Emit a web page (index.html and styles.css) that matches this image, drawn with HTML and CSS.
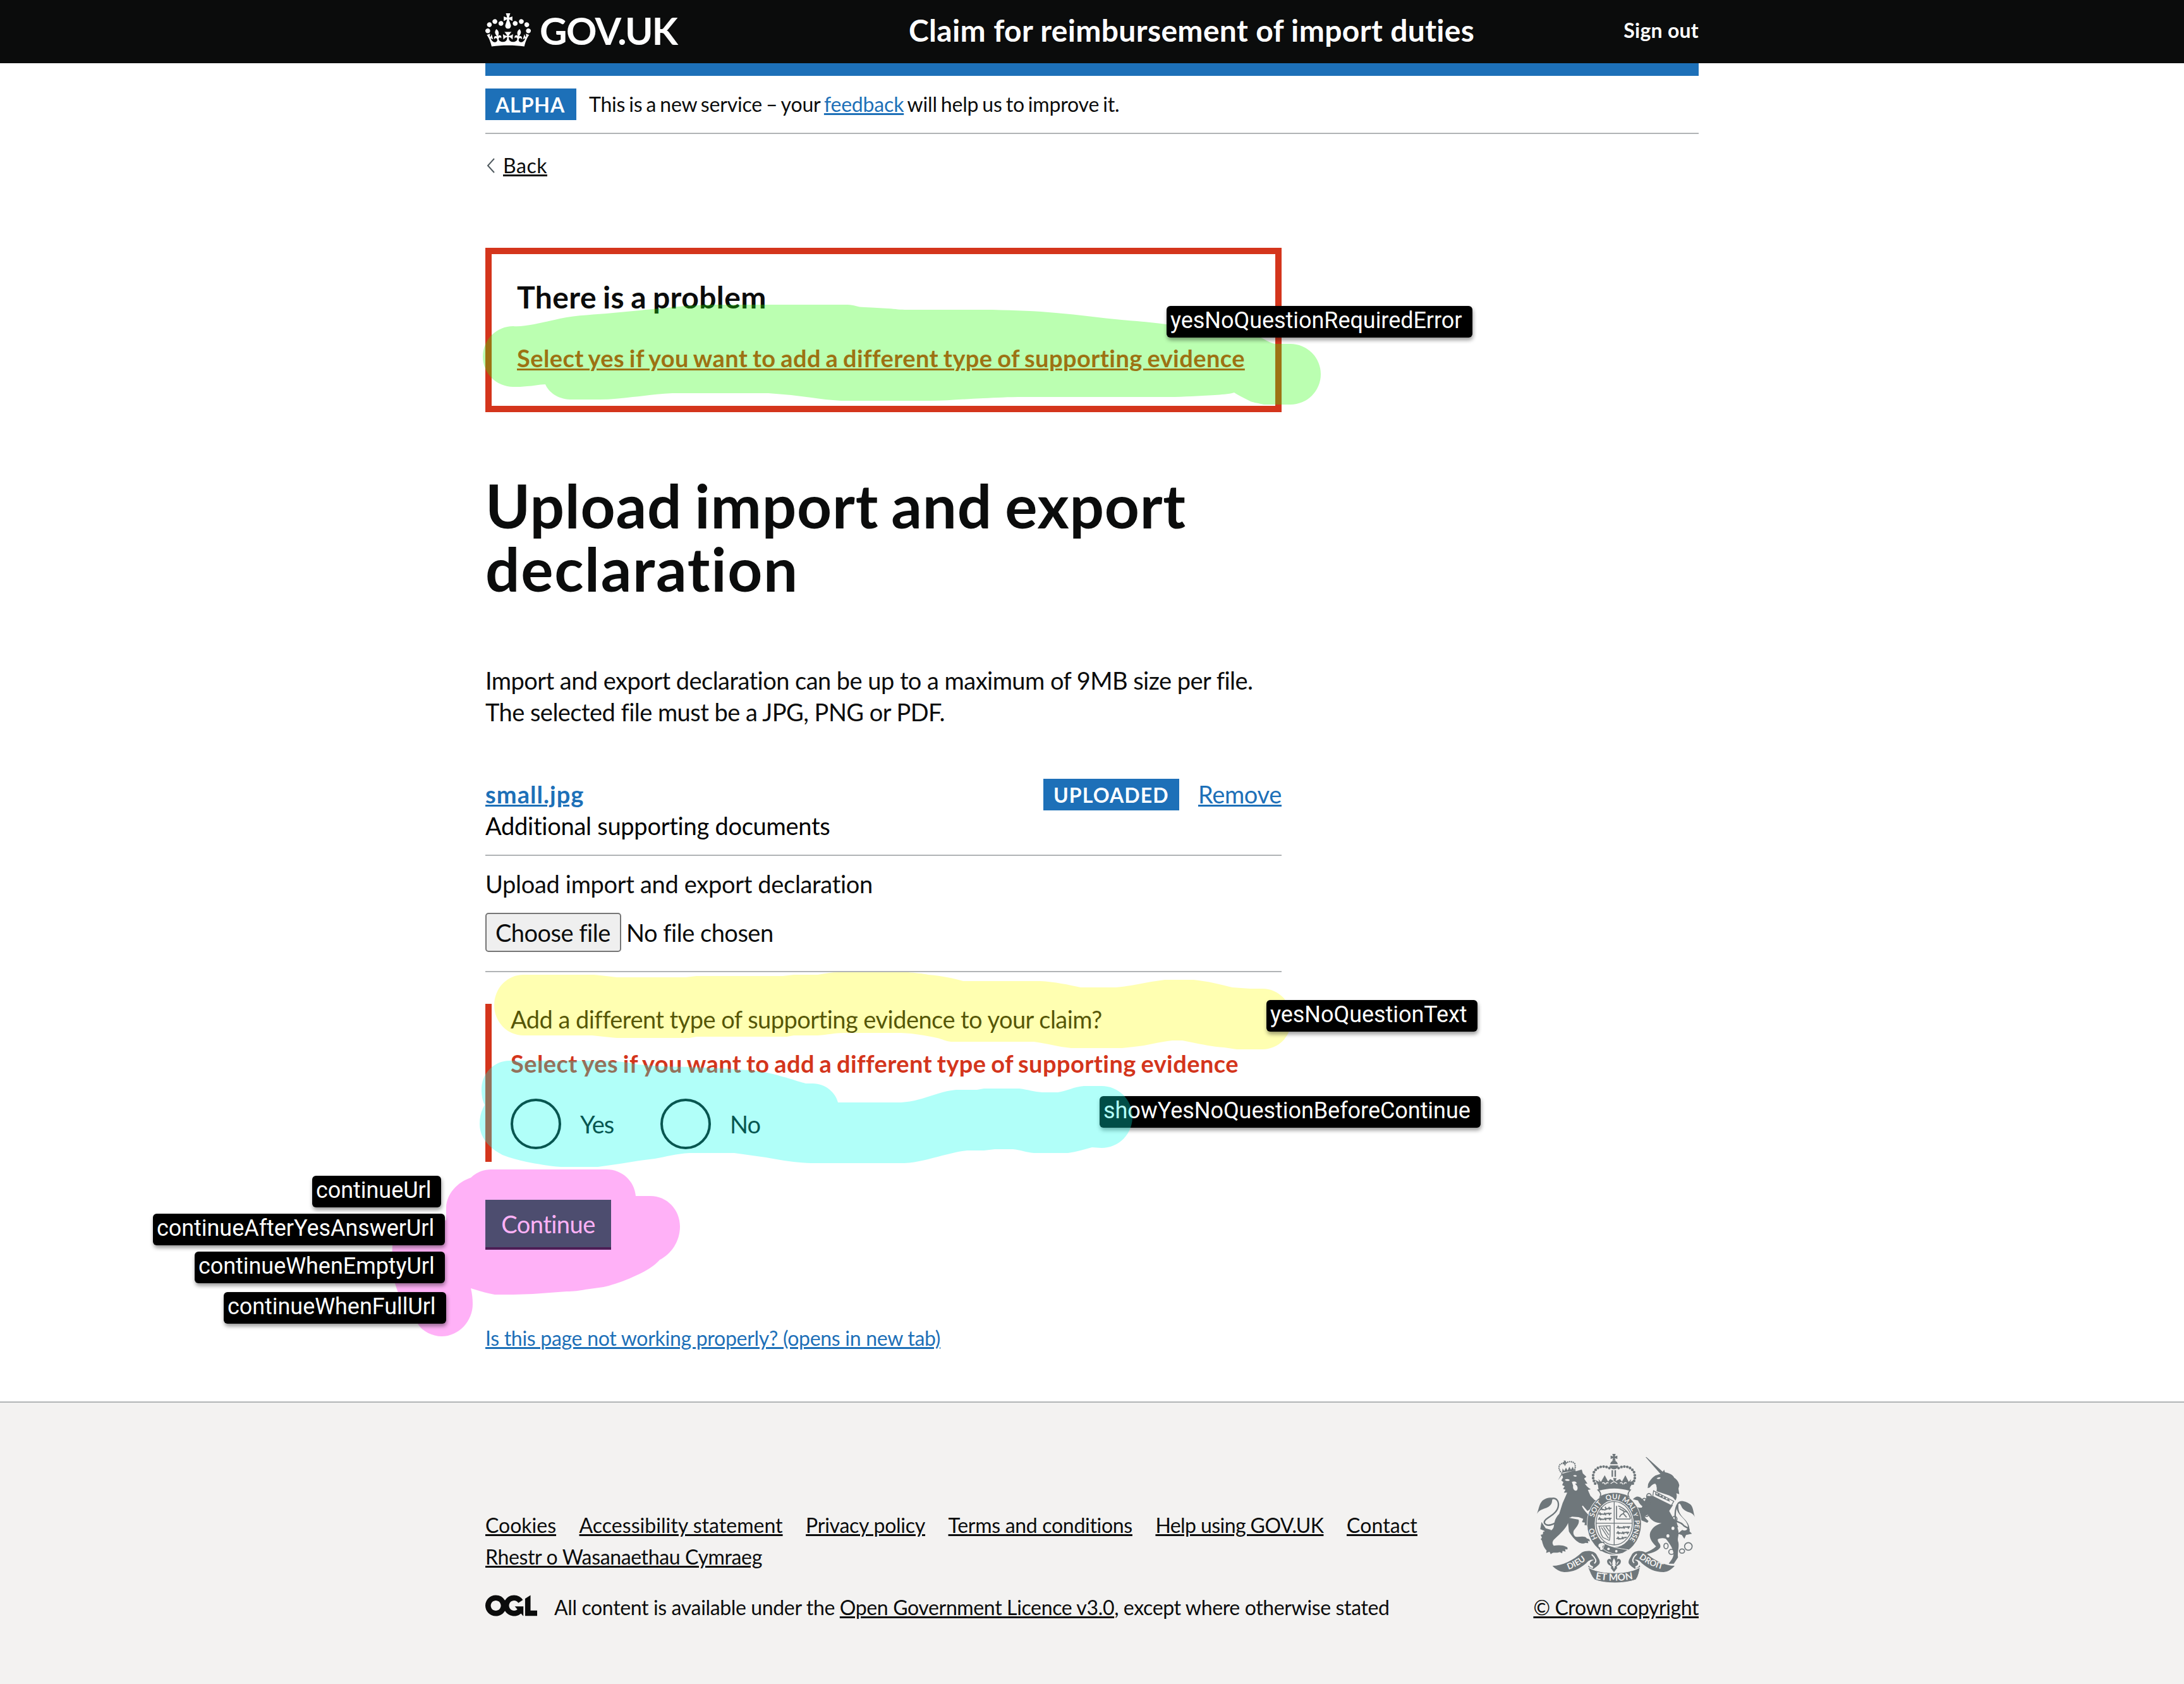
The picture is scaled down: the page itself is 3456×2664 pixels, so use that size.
FILE: index.html
```
<!DOCTYPE html>
<html lang="en">
<head>
<meta charset="utf-8">
<title>Upload import and export declaration</title>
<link rel="stylesheet" href="styles.css">
</head>
<body>
<header class="header">
  <div class="container header-row">
    <div class="logo">
      <svg class="crown" viewBox="0 0 132 97" fill="#fff"><path fill-rule="evenodd" d="M25 30.2c3.5 1.5 7.7-.2 9.1-3.7 1.5-3.6-.2-7.8-3.9-9.2-3.6-1.4-7.6.3-9.1 3.9-1.4 3.5.3 7.5 3.9 9zM9 39.5c3.6 1.5 7.8-.2 9.2-3.7 1.5-3.6-.2-7.8-3.9-9.1-3.6-1.5-7.6.2-9.1 3.8-1.4 3.5.3 7.5 3.8 9zM4.4 57.2c3.5 1.5 7.7-.2 9.1-3.8 1.5-3.6-.2-7.7-3.9-9.1-3.5-1.5-7.6.3-9.1 3.8-1.4 3.5.3 7.6 3.9 9.1zm38.3-21.4c3.5 1.5 7.7-.2 9.1-3.8 1.5-3.6-.2-7.7-3.9-9.1-3.6-1.5-7.6.3-9.1 3.8-1.3 3.6.4 7.7 3.9 9.1zm64.4-5.6c-3.6 1.5-7.8-.2-9.1-3.7-1.5-3.6.2-7.8 3.8-9.2 3.6-1.4 7.7.3 9.2 3.9 1.3 3.5-.4 7.5-3.9 9zm15.9 9.3c-3.6 1.5-7.7-.2-9.1-3.7-1.5-3.6.2-7.8 3.7-9.1 3.6-1.5 7.7.2 9.2 3.8 1.5 3.5-.3 7.5-3.8 9zm4.7 17.7c-3.6 1.5-7.8-.2-9.2-3.8-1.5-3.6.2-7.7 3.9-9.1 3.6-1.5 7.7.3 9.2 3.8 1.3 3.5-.4 7.6-3.9 9.1zM89.3 35.8c-3.6 1.5-7.8-.2-9.2-3.8-1.4-3.6.2-7.7 3.9-9.1 3.6-1.5 7.7.3 9.2 3.8 1.4 3.6-.3 7.7-3.9 9.1zM69.7 17.7l8.9 4.7V9.3l-8.9 2.8c-.2-.3-.5-.6-.9-.9L72.4 0H59.6l3.5 11.2c-.3.3-.6.5-.9.9l-8.8-2.8v13.1l8.8-4.7c.3.3.6.7.9.9l-5 15.4v.1c-.2.8-.4 1.6-.4 2.4 0 4.1 3.1 7.5 7 8.1h.2c.3 0 .7.1 1 .1.4 0 .7 0 1-.1h.2c4-.6 7.1-4.1 7.1-8.1 0-.8-.1-1.7-.4-2.4V34l-5.1-15.4c.4-.2.7-.6 1-.9zM66 92.8c16.9 0 32.8 1.1 47.1 3.2 4-16.9 8.9-26.7 14-33.5l-9.6-3.4c1 4.9 1.1 7.2 0 10.2-1.5-1.4-3-4.3-4.2-8.7L108.6 76c2.8-2 5-3.2 7.5-3.3-4.4 9.4-10 11.9-13.6 11.2-4.3-.8-6.3-4.6-5.6-7.9 1-4.7 5.7-5.9 8-.5 4.3-8.7-3-11.4-7.6-8.8 7.1-7.2 7.9-13.5 2.1-21.1-8 6.1-8.1 12.3-4.5 20.8-4.7-5.4-12.1-2.5-9.5 6.2 3.4-5.2 7.9-2 7.2 3.1-.6 4.3-6.4 7.8-13.5 7.2-10.3-.9-10.9-8-11.2-13.8 2.5-.5 7.1 1.8 11 7.3L80.2 60c-4.1 4.4-8 5.3-12.3 5.4 1.4-4.4 8-11.6 8-11.6H55.5s6.4 7.2 7.9 11.6c-4.2-.1-8-1-12.3-5.4l1.4 16.4c3.9-5.5 8.5-7.7 10.9-7.3-.3 5.8-.9 12.8-11.1 13.8-7.2.6-12.9-2.9-13.5-7.2-.7-5 3.8-8.3 7.1-3.1 2.7-8.7-4.6-11.6-9.4-6.2 3.7-8.5 3.6-14.7-4.6-20.8-5.8 7.6-5 13.9 2.2 21.1-4.7-2.6-11.9.1-7.7 8.8 2.3-5.5 7.1-4.2 8.1.5.7 3.3-1.3 7.1-5.7 7.9-3.5.7-9-1.8-13.5-11.2 2.5.1 4.7 1.3 7.5 3.3l-4.7-15.4c-1.2 4.4-2.7 7.2-4.3 8.7-1.1-3-.9-5.3 0-10.2l-9.5 3.4c5 6.9 9.9 16.7 14 33.5 14.8-2.1 30.8-3.2 47.7-3.2z"/></svg>
      <span class="logo-text">GOV.UK</span>
    </div>
    <div class="service-name">Claim for reimbursement of import duties</div>
    <div class="sign-out">Sign out</div>
  </div>
</header>
<div class="container">
  <div class="blue-bar"></div>
  <div class="phase-banner">
    <strong class="tag tag-alpha">ALPHA</strong>
    <span class="phase-text">This is a new service – your <a class="link" href="#">feedback</a> will help us to improve it.</span>
  </div>
  <div class="back">
    <svg class="back-arrow" viewBox="0 0 14 24" fill="none" stroke="#505a5f" stroke-width="2"><path d="M13 1L3 12l10 11"/></svg>
    <a class="link-black back-link" href="#">Back</a>
  </div>
  <main class="main">
    <section class="error-summary">
      <h2 class="error-title">There is a problem</h2>
      <a class="error-link" href="#">Select yes if you want to add a different type of supporting evidence</a>
    </section>
    <h1 class="heading"><span class="heading-a">Upload import and export</span><br><span class="heading-b">declaration</span></h1>
    <p class="intro">Import and export declaration can be up to a maximum of 9MB size per file.<br>The selected file must be a JPG, PNG or PDF.</p>
    <div class="file-row">
      <div class="file-info">
        <a class="link file-name" href="#">small.jpg</a>
        <span class="file-type">Additional supporting documents</span>
      </div>
      <div class="file-actions">
        <strong class="tag tag-uploaded">UPLOADED</strong>
        <a class="link remove" href="#">Remove</a>
      </div>
    </div>
    <div class="upload">
      <label class="upload-label">Upload import and export declaration</label>
      <div class="upload-control"><span class="choose">Choose file</span><span class="no-file">No file chosen</span></div>
    </div>
    <div class="question">
      <div class="question-text">Add a different type of supporting evidence to your claim?</div>
      <div class="question-error">Select yes if you want to add a different type of supporting evidence</div>
      <div class="radios">
        <div class="radio radio-yes"><span class="circle"></span><span class="radio-label">Yes</span></div>
        <div class="radio"><span class="circle"></span><span class="radio-label">No</span></div>
      </div>
    </div>
    <button class="button">Continue</button>
    <div class="help"><a class="link help-link" href="#">Is this page not working properly? (opens in new tab)</a></div>
  </main>
</div>
<footer class="footer">
  <div class="container footer-row">
    <div class="footer-left">
      <nav class="footer-links">
        <a class="link-black" href="#">Cookies</a>
        <a class="link-black access" href="#">Accessibility statement</a>
        <a class="link-black privacy" href="#">Privacy policy</a>
        <a class="link-black terms" href="#">Terms and conditions</a>
        <a class="link-black helping" href="#">Help using GOV.UK</a>
        <a class="link-black contact" href="#">Contact</a>
        <a class="link-black rhestr" href="#">Rhestr o Wasanaethau Cymraeg</a>
      </nav>
      <div class="licence">
        <svg class="ogl" viewBox="0 0 483.2 195.7" fill="#0b0c0c"><path d="M421.500 142.800V.1l-50.700 32.300v161.100h112.400v-50.700zm-122.300-9.600A47.120 47.120 0 0 1 221 97.800c0-26 21.100-47.100 47.100-47.100 16.700 0 31.400 8.700 39.700 21.800l42.700-27.200A97.630 97.630 0 0 0 268.100 0c-36.500 0-68.300 20.100-85.100 49.700A98 98 0 0 0 97.800 0C43.900 0 0 43.900 0 97.800s43.900 97.800 97.800 97.800c36.500 0 68.300-20.100 85.100-49.700a97.760 97.760 0 0 0 149.600 25.400l19.400 22.200h3v-87.800h-80l24.300 27.500zM97.800 145c-26 0-47.100-21.100-47.100-47.100s21.100-47.100 47.100-47.100 47.100 21.100 47.100 47.100S123.800 145 97.800 145"/></svg>
        <span class="licence-text">All content is available under the <a class="link-black" href="#">Open Government Licence v3.0</a>, except where otherwise stated</span>
      </div>
    </div>
    <div class="footer-right">
      <svg class="crest" viewBox="96 54 750 615" fill="#6f777b">
        <!-- lion -->
        <g>
          <path d="M196 182l18-24 95-27 5 18 17 17-11 8 16 24-12 1c8 12 16 20 28 26l-14 3 12 28 20 20 14 4-30 36-18 12-22-26-4 3c10 22 30 40 50 62l16 40-14-4-4 10-10-10-10 6-6-14-10 0 2-12-14-2 6-16-22-8-32-2c-6 4-14 6-18 4l50 10c6 16-8 34-22 50-6 12-2 22 6 30 16 6 44-8 56 10 12 0 14 8 12 14l-8-4 2 12-14-2c-8 6-20 2-28 0-22-12-38-34-50-54l-4-40c-10 26-34 48-62 74-12 10-16 22-6 34 18-4 44-4 58 4 8 2 10 8 6 14l-10-2 2 12-14-4-2 12-12-6c-16 8-30-4-42 10l-6-12-16 6 2-12c-12-10-18-28-22-46l-6-8 6-6-6-14 10-2 2-14 12 4c18-2 34-10 38-26 4-24 4-38 26-62l16-50 22-50-16 0 8-14-12-4 8-12-12-6 6-14-10-8 8-14-6-20z"/>
          <path d="M228 180c10-6 20-4 24 2-8 6-18 4-24-2zM268 160c8-4 14-2 18 2-6 4-12 4-18-2zM262 190c12-6 22-2 24 8-8-2-10 2-4 6 10 8 10 24 0 28-12 0-16-14-14-24z" fill="#f3f2f1"/>
          <path d="M204 370c-28 24-60 34-72 16-10-24 62-36 66-84 2-22-10-36-28-34" fill="none" stroke="#6f777b" stroke-width="7"/>
          <path d="M96 342c8-20 10-42 22-58 14-18 40-22 58-18-12 8-4 18-14 32-18 24-48 14-66 44zM118 380l-6 34 20 8-4 18c14 0 28-10 36-22l-26-8z"/>
          <path d="M216 156l64-18" fill="none" stroke="#6f777b" stroke-width="9"/>
          <path d="M214 148c-16-16-18-34-4-44 10-4 16 0 20 4 6-16 34-20 46-4 4 12 2 22-2 32" fill="none" stroke="#6f777b" stroke-width="7" stroke-linecap="round" stroke-dasharray="0 9"/>
          <path d="M216 146l2-20 8 12 8-16 8 14 8-18 8 14 8-14 8 18zM224 88l10 2-1 6 6 0-2 8-6-1-2 14-4-14-6 1-1-7 6-1z"/>
        </g>
        <!-- unicorn -->
        <g>
          <path d="M612 72l4 0 80 72-12 10z"/>
          <path d="M624 200c8-16 18-30 34-40l30-10 12-18 4 12c28 6 40 16 44 26 16 10 22 24 24 36l-4 16 4 26-14-4c4 14 2 24-4 34l-12-14-18-10-60-20c4-18-2-28-6-36-12 2-20 10-26 18l-10 4z"/>
          <path d="M664 174c6-6 14-8 20-4-4 6-12 8-20 4zM640 208l20-6 4 6-16 8z" fill="#f3f2f1"/>
          <path d="M650 258l92 42-18 28c16 30 36 60 44 96 4 20-8 34 0 54 4 24-6 46-2 70l-20 30-24 0c10-16 26-30 22-52-4-26-22-48-36-66-14-6-26-4-38 2-2 18 16 20 12 38-12 20-44 28-74 34l-8 18-36 4 10-22 24-6c26-4 46-16 64-32-18-18-36-40-28-66 8-20 24-36 54-44-28 0-54-14-64-40l-22 8-22 10 4 22-8-2-12-20c4-16 14-20 24-22l-26-14-16-10 10-12 24 6 14 0c12-26 18-40 26-56z"/>
          <path d="M640 258c-8 18-10 28-26 26-12-4-22-22-36-24-10-2-18 4-26 12l24 6c6 14 14 24 26 30 14 0 24-2 32-10zM596 330l16 32 14 14-6 8-28-12-6-28z"/>
          <path d="M650 232l96 50-12 20-88-44z" fill="#f3f2f1" stroke="#6f777b" stroke-width="4"/>
          <path d="M658 236l8 14 10-6 4 14 12-6 2 14 12-6 4 14 12-4 6 14-70-32z"/>
          <path d="M764 406c-16-36-16-90 4-116 12-10 30-6 44 4M740 366c20 16 34 12 48 26 10 16 28 10 30 26-2 14-18 18-28 12" fill="none" stroke="#6f777b" stroke-width="7"/>
          <path d="M846 356c-8-20-6-42-20-58-16-16-40-16-58-8 14 4 12 18 22 28 18 20 44 12 56 38zM760 300c-8 44 44 62 52 96 4 20-10 30-26 22l-22 18 20 6 12 18 8-18 28-6-12-12c6-60-58-60-52-124z"/>
          <g fill="none" stroke="#6f777b" stroke-width="5"><ellipse cx="628" cy="258" rx="11" ry="13"/><ellipse cx="606" cy="280" rx="10" ry="12"/><ellipse cx="616" cy="340" rx="12" ry="14"/><ellipse cx="750" cy="366" rx="11" ry="13"/><circle cx="815" cy="496" r="18"/><ellipse cx="785" cy="518" rx="12" ry="10"/><ellipse cx="735" cy="522" rx="13" ry="12"/><ellipse cx="709" cy="494" rx="10" ry="13"/></g>
          <ellipse cx="742" cy="410" rx="7" ry="8" fill="#f3f2f1"/><ellipse cx="718" cy="446" rx="7" ry="8" fill="#f3f2f1"/>
        </g>
        <!-- garter and shield -->
        <ellipse cx="463" cy="388" rx="130" ry="149" fill="#f3f2f1"/>
        <ellipse cx="463" cy="388" rx="110" ry="129" fill="#f3f2f1" stroke="#6f777b" stroke-width="35"/>
        <ellipse cx="463" cy="386" rx="86" ry="103" fill="none" stroke="#6f777b" stroke-width="4"/>
        <path d="M463 283v206M377 386h172" stroke="#6f777b" stroke-width="4"/>
        <g stroke="#6f777b" fill="none" stroke-width="6">
          <path d="M396 322c10-8 18 6 28-2s16 0 26-6M400 310l8 14m12-16l6 14m12-14l4 14M388 344c12-8 20 4 32-2s18 2 30-4M394 334l6 14m16-12l8 12m12-12l6 12M386 368c12-8 22 4 32-2s20 2 32-4M392 358l8 14m18-12l6 12m14-12l6 12"/>
          <path d="M474 408c12-8 22 4 32-2s20 2 32-4M480 398l8 14m18-12l6 12m14-12l6 12M474 434c12-8 20 4 32-2s18 2 28-4M480 424l6 14m16-12l8 12m12-12l6 12M474 460c10-8 18 6 26-2s14 0 22-6M480 450l6 14m14-14l6 12"/>
          <path d="M474 366h66M474 366v-62M482 304c26 10 50 28 58 60M488 358c8-22 16-10 22-24 2-12-18-8-22-20M504 338l18 20m-10-28l16 4" stroke-width="5"/>
          <path d="M388 400l58-2M392 402c8 22 2 32 18 52l30 14M444 400c-2 22 2 44-4 68M402 406l34 52M412 404l26 38M424 402l16 22" stroke-width="4"/>
        </g>
        <path d="M398 478c-16 4-16 22-4 26-4 12 12 16 18 6l-2-14 10-8-8-12z" fill="#f3f2f1" stroke="#6f777b" stroke-width="5"/>
        <path d="M418 482c34 18 70 24 112 30l-26 16c-32 10-66 2-94-20z" stroke="#f3f2f1" stroke-width="3"/>
        <circle cx="436" cy="508" r="6" fill="#f3f2f1"/><circle cx="473" cy="519" r="6" fill="#f3f2f1"/>
        <path id="garter" d="M463 504A98 116 0 0 1 463 272A98 116 0 0 1 463 504" fill="none"/>
        <g class="crest-text" fill="#f3f2f1" font-size="34">
          <text><textPath href="#garter" startOffset="122">HO</textPath></text>
          <text><textPath href="#garter" startOffset="236">SOIT</textPath></text>
          <text><textPath href="#garter" startOffset="330">QUI</textPath></text>
          <text><textPath href="#garter" startOffset="408">MAL</textPath></text>
          <text font-size="28"><textPath href="#garter" startOffset="464">Y</textPath></text>
          <text font-size="32"><textPath href="#garter" startOffset="538">PENSE</textPath></text>
        </g>
        <!-- royal crown -->
        <path d="M386 228c50-16 102-16 154 0-10 10-14 22-8 32-46-22-90-22-136 0 6-12 2-22-10-32z" fill="#f3f2f1" stroke="#6f777b" stroke-width="5"/>
        <path d="M386 208c52-14 102-14 154 0l-4 24c-48-14-98-14-146 0zM372 180l20 10-4-14 12 14 18-32 16 30 10-12 18 10-4-14h16l-4 14 20-10 10 12 16-30 16 32 12-14-4 14 20-10-20 32H390z"/>
        <path d="M406 196c8-6 14 0 12 6m18-6c-8-6-14 0-12 6M490 196c8-6 14 0 12 6m20-6c-8-6-14 0-12 6M446 198l16-10 16 10" stroke="#f3f2f1" stroke-width="4" fill="none"/>
        <path d="M440 124c-28-14-62-6-74 22-6 18-4 34 8 54M484 124c28-14 62-6 74 22 6 18 4 34-8 54" fill="none" stroke="#6f777b" stroke-width="13" stroke-linecap="round" stroke-dasharray="0 14"/>
        <path d="M454 134v32M468 134v32" stroke="#6f777b" stroke-width="7"/>
        <path d="M442 112h40c0 24-40 24-40 0zM444 106c4-22 32-22 36 0zM454 57h16l-4 12 12-4v16l-12-4 4 12h-16l4-12-12 4V65l12 4z"/>
        <!-- ribbons -->
        <path d="M170 588c44 0 100-26 140-64 24-12 60-8 70 12 8 16 20 30 12 44-8 10-18 16-28 24l-24-10c0-18 12-30 28-34-16-6-30 6-38 16-34 28-60 42-104 42-22-2-42-14-56-30z"/>
        <path d="M750 588c-44 0-100-26-140-64-24-12-54-8-64 12-8 16-20 30-12 44 8 10 18 16 26 22l26-8c0-18-12-30-28-34 16-6 28 6 36 16 34 28 60 42 104 42 22-2 38-14 52-30z"/>
        <path d="M356 534c16 14 28 34 12 42M570 532c-16 14-26 34-12 42" stroke="#f3f2f1" stroke-width="6" fill="none"/>
        <path d="M346 566c-8 16 0 24 16 30M578 566c8 16 0 24-14 30" stroke="#f3f2f1" stroke-width="9" fill="none"/>
        <path d="M338 594c50 36 196 38 248 0-4 24-8 44-20 60-56 20-148 20-196 0-16-16-22-36-32-60z" stroke="#f3f2f1" stroke-width="3"/>
        <path d="M444 540h36l-4 18c10-8 22 2 18 14-4 14-16 12-20 22l4 4-16 20-16-20 4-4c-4-10-16-8-20-22-4-12 8-22 18-14z"/>
        <path d="M462 556c-8 14-8 22 0 42 8-20 8-28 0-42zM452 586h20M440 568c6 4 8 10 8 14m36-14c-6 4-8 10-8 14" stroke="#f3f2f1" stroke-width="4" fill="#f3f2f1"/>
        <path id="rib-l" d="M234 610Q290 594 338 552" fill="none"/>
        <path id="rib-r" d="M576 548Q632 592 696 606" fill="none"/>
        <path id="rib-c" d="M370 650Q462 668 556 650" fill="none"/>
        <g class="crest-text" fill="#f3f2f1" font-size="40">
          <text><textPath href="#rib-l" startOffset="50%">DIEU</textPath></text>
          <text><textPath href="#rib-r" startOffset="50%">DROIT</textPath></text>
          <text font-size="46"><textPath href="#rib-c" startOffset="50%">ET MON</textPath></text>
        </g>
      </svg>
      <a class="link-black crown-copy" href="#">© Crown copyright</a>
    </div>
  </div>
</footer>

<!-- highlighter marks and callouts over the page -->
<svg class="marks" viewBox="0 0 3456 2664">
  <path fill="rgb(32,255,0)" d="M812 516C822 517 832 515 845 513C858 510 870 508 886 504C914 498 942 498 970 495L1054 487C1080 484 1108 482 1137 482H1341C1352 482 1356 486 1368 486C1384 487 1392 487 1405 488C1418 489 1424 490 1436 490H1571C1606 491 1640 492 1671 495C1708 498 1742 503 1775 506C1800 508 1822 510 1845 513L1995 534C2004 538 2008 542 2018 544H2042A48 48 0 0 1 2042 640H2000C1992 638 1984 637 1979 635C1970 630 1960 626 1953 621C1944 624 1932 624 1922 625C1896 626 1876 628 1849 628H1619C1596 628 1576 629 1556 630C1528 631 1500 634 1472 634H1331C1314 633 1298 631 1284 629L1252 625L1216 622H1064C1042 623 1022 626 1001 628C984 630 966 632 949 632H902C882 631 868 620 863 608C852 608 844 611 834 611C826 612 820 612 812 612A48 48 0 0 1 812 516Z"/>
  <path fill="rgb(255,255,0)" d="M828 1542H940C954 1543 964 1545 976 1546H1085L1102 1544H1239L1256 1542H1294C1306 1540 1316 1538 1327 1538H1437C1448 1539 1460 1540 1469 1542C1492 1544 1510 1548 1524 1552H1646C1668 1553 1692 1558 1710 1562H1766C1788 1560 1804 1556 1822 1553L1843 1550H1889C1910 1552 1934 1558 1950 1562L1978 1564H1998A46 48 0 0 1 1998 1660H1957L1937 1657C1918 1656 1902 1652 1886 1649L1871 1646H1855C1834 1648 1816 1654 1794 1656L1776 1658H1695C1674 1656 1654 1650 1636 1648H1505C1496 1647 1492 1644 1483 1642C1464 1638 1448 1635 1426 1634H1335C1320 1634 1310 1637 1294 1638H1256L1245 1640H1102L1091 1642H976C960 1641 950 1639 937 1638H828A46 48 0 0 1 828 1542Z"/>
  <path fill="rgb(0,255,236)" d="M806 1678H959C980 1679 996 1681 1009 1684L1047 1687L1091 1688L1140 1690L1184 1693C1206 1695 1222 1698 1234 1702C1250 1706 1260 1710 1275 1714H1286C1306 1714 1322 1728 1326 1744H1426C1440 1743 1448 1741 1459 1738C1476 1733 1492 1726 1513 1724H1546L1557 1722H1613C1628 1724 1636 1727 1649 1728H1674C1688 1726 1700 1719 1715 1718H1743A49 49 0 0 1 1743 1816L1728 1815C1716 1818 1704 1822 1690 1824H1636C1624 1823 1614 1819 1603 1818H1574L1557 1820H1530C1514 1822 1504 1825 1491 1828C1472 1833 1452 1839 1431 1840H1283C1256 1839 1234 1835 1212 1831L1162 1824H1091C1070 1825 1054 1830 1036 1833C1016 1835 1000 1838 981 1841L946 1846H888C868 1845 850 1841 833 1838C820 1835 808 1832 795 1827C774 1816 759 1800 759 1778C759 1766 762 1756 767 1748C763 1740 762 1732 762 1723C762 1698 782 1678 806 1678Z"/>
  <path fill="rgb(255,0,230)" d="M777 1850H960C984 1850 1004 1868 1006 1892H1029C1056 1892 1076 1914 1076 1940C1076 1964 1062 1984 1044 1993C1034 2004 1020 2012 1006 2018C990 2026 972 2032 955 2036L926 2040C916 2042 908 2043 897 2043C878 2044 862 2046 843 2047C822 2048 802 2048 783 2048C776 2047 770 2045 765 2044L745 2038C747 2046 748 2054 748 2063C748 2090 726 2114 699 2114C684 2114 668 2106 661 2094C648 2078 632 2056 625 2030C620 2010 620 1990 621 1970L706 1930V1910C707 1888 724 1870 745 1863C754 1855 764 1850 777 1850Z"/>
</svg>
<div class="callout" style="left:1846px;top:484px;width:484px">yesNoQuestionRequiredError</div>
<div class="callout" style="left:2004px;top:1582px;width:334px">yesNoQuestionText</div>
<div class="callout callout-under" style="left:1740px;top:1734px;width:603px">showYesNoQuestionBeforeContinue</div>
<div class="callout" style="left:494px;top:1860px;width:204px">continueUrl</div>
<div class="callout" style="left:242px;top:1920px;width:462px">continueAfterYesAnswerUrl</div>
<div class="callout" style="left:308px;top:1980px;width:396px">continueWhenEmptyUrl</div>
<div class="callout" style="left:354px;top:2044px;width:352px">continueWhenFullUrl</div>
</body>
</html>
```
FILE: styles.css
```
* { box-sizing: border-box; }
body {
  margin: 0;
  position: relative;
  width: 3456px;
  height: 2664px;
  overflow: hidden;
  background: #fff;
  color: #0b0c0c;
  font-family: Lato, "Open Sans", sans-serif;
  font-size: 38px;
  line-height: 50px;
  font-variant-ligatures: none;
}
.container { width: 1920px; margin: 0 auto; }
a { text-decoration-line: underline; text-decoration-thickness: 3px; text-underline-offset: 2px; }
.link { color: #1d70b8; }
.link-black { color: #0b0c0c; }

/* header */
.header { height: 100px; background: #0b0c0c; color: #fff; font-weight: 700; }
.header-row { display: flex; align-items: flex-start; }
.logo { display: flex; width: 670px; }
.crown { width: 72px; height: 53px; margin-top: 21px; }
.logo-text { margin: 18px 0 0 14px; font-size: 60px; line-height: 60px; letter-spacing: -1.6px; }
.service-name { margin-top: 18px; font-size: 48px; line-height: 60px; letter-spacing: 0.34px; white-space: nowrap; }
.sign-out { margin: 28px 0 0 auto; font-size: 32px; line-height: 40px; letter-spacing: 0.25px; }
.blue-bar { height: 20px; background: #1d70b8; }

/* phase banner */
.phase-banner { display: flex; align-items: center; height: 92px; border-bottom: 2px solid #b1b4b6; font-size: 32px; line-height: 40px; }
.tag { display: block; height: 50px; line-height: 51px; padding-left: 16px; background: #1d70b8; color: #fff; font-size: 32px; font-weight: 700; }
.tag-alpha { width: 144px; letter-spacing: 0.9px; }
.phase-text { margin-left: 20px; letter-spacing: -0.18px; word-spacing: -2px; }
.back { display: flex; align-items: center; height: 40px; margin-top: 30px; font-size: 32px; line-height: 40px; }
.back-arrow { width: 14px; height: 24px; margin: 0 13px 0 1px; }
.back-link { letter-spacing: 0.53px; }

/* main column */
.main { width: 1260px; padding-top: 110px; }
.error-summary { height: 260px; border: 10px solid #d4351c; padding: 38px 0 0 40px; }
.error-title { margin: 0 0 41px; font-size: 48px; line-height: 60px; letter-spacing: 0.4px; word-spacing: -2px; }
.error-link { display: block; color: #d4351c; font-weight: 700; letter-spacing: 0.42px; word-spacing: -2px; white-space: nowrap; }
.heading { margin: 97px 0 0; font-size: 96px; line-height: 100px; font-weight: 700; white-space: nowrap; }
.heading-a { letter-spacing: 0.8px; word-spacing: -4px; }
.heading-b { letter-spacing: 1.7px; }
.intro { margin: 102px 0 0; letter-spacing: -0.54px; white-space: nowrap; }
.file-row { display: flex; justify-content: space-between; align-items: flex-start; margin-top: 80px; height: 123px; border-bottom: 2px solid #b1b4b6; }
.file-info { display: flex; flex-direction: column; align-items: flex-start; }
.file-name { font-weight: 700; letter-spacing: 1.05px; }
.file-type { letter-spacing: -0.26px; color: #000; }
.file-actions { display: flex; gap: 30px; }
.tag-uploaded { width: 215px; margin-top: 1px; letter-spacing: 1.1px; }
.remove { letter-spacing: -0.34px; }
.upload { height: 184px; padding-top: 19px; border-bottom: 2px solid #b1b4b6; }
.upload-label { display: block; letter-spacing: -0.32px; }
.upload-control { display: flex; align-items: center; margin-top: 21px; }
.choose { width: 215px; height: 62px; border: 2px solid #767676; border-radius: 5px; background: #efefef; line-height: 59px; padding-left: 14px; letter-spacing: -0.52px; }
.no-file { margin-left: 8px; letter-spacing: -0.49px; padding-bottom: 1px; }
.question { height: 250px; margin-top: 50px; padding-left: 30px; border-left: 10px solid #d4351c; }
.question-text { line-height: 48px; letter-spacing: -0.53px; }
.question-error { margin-top: 21px; color: #d4351c; font-weight: 700; letter-spacing: 0.42px; word-spacing: -2px; white-space: nowrap; }
.radios { display: flex; margin-top: 31px; }
.radio { display: flex; align-items: center; }
.radio-yes { width: 237px; }
.circle { width: 80px; height: 80px; border: 4px solid #0b0c0c; border-radius: 50%; }
.radio-label { margin-left: 30px; letter-spacing: -0.9px; }
.button { display: block; width: 199px; height: 75px; margin: 60px 0 0; padding: 0; border: 0; background: #00703c; color: #fff; box-shadow: 0 4px 0 #002d18; font: inherit; letter-spacing: -0.54px; }
.help { margin-top: 124px; font-size: 32px; line-height: 40px; letter-spacing: -0.29px; }

/* footer */
.footer { height: 447px; margin-top: 80px; border-top: 2px solid #b1b4b6; background: #f3f2f1; font-size: 32px; }
.footer-row { display: flex; justify-content: space-between; }
.footer-left { width: 1500px; padding-top: 169px; }
.footer-links { display: flex; flex-wrap: wrap; column-gap: 36.5px; line-height: 50px; }
.access { letter-spacing: 0.03px; }
.privacy { letter-spacing: -0.26px; }
.terms { letter-spacing: -0.3px; }
.helping { letter-spacing: -0.58px; }
.contact { letter-spacing: 0.15px; }
.rhestr { letter-spacing: -0.37px; }
.licence { display: flex; margin-top: 35px; line-height: 40px; letter-spacing: -0.36px; }
.ogl { width: 82px; height: 34px; margin: 0 27px 0 0; }
.footer-right { display: flex; flex-direction: column; align-items: flex-end; padding-top: 80px; }
.crest { width: 250px; height: 205px; margin-right: 6px; }
.crown-copy { margin-top: 19px; line-height: 40px; letter-spacing: -0.4px; }
.crest-text { font-family: Lato, sans-serif; font-weight: 700; text-anchor: middle; }

/* annotations */
.marks { position: absolute; inset: 0; width: 3456px; height: 2664px; opacity: 0.3; z-index: 2; pointer-events: none; }
.callout { position: absolute; z-index: 3; height: 50px; padding-left: 6px; border-radius: 6px; background: #000; color: #fff; box-shadow: 1px 4px 6px rgba(0, 0, 0, 0.4); font-family: Roboto, sans-serif; font-size: 36px; line-height: 46px; white-space: nowrap; letter-spacing: -0.05px; }
.callout-under { z-index: 1; }
```
